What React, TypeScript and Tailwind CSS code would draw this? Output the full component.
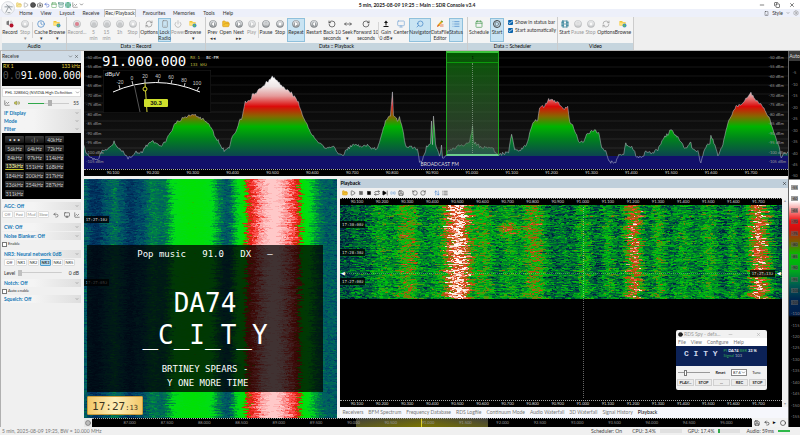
import type { ReactNode } from "react";
import {
  Archive, Calendar, Camera, Check, ChevronDown, Circle, Clock, Film, FolderOpen, Globe, List,
  Minus, MoveHorizontal, Play, Radio, RefreshCw, Repeat, RotateCcw, RotateCw, Save, Search, Settings,
  SkipForward, Smartphone, Square, Undo2, Volume2, X, ArrowUpDown, Copy, LineChart, Monitor, Power,
} from "lucide-react";
import { clsx } from "clsx";

// signal trace, x across the band and y as the level (lower is stronger)
const TRACE = [
  [84, 147], [86, 153], [92, 160], [98, 160], [102, 152], [107, 151], [110, 147], [114, 143], [117, 149], [122, 152],
  [128, 159], [132, 158], [135, 153], [140, 154], [143, 152], [146, 147], [152, 142], [160, 147], [165, 143], [170, 134],
  [173, 128], [178, 122], [183, 119], [192, 115], [200, 119], [207, 123], [215, 137], [220, 145], [224, 152], [229, 149],
  [232, 138], [237, 130], [239, 121], [242, 119], [245, 103], [251, 100], [252, 96], [255, 94], [262, 87], [268, 82],
  [272, 77], [277, 82], [285, 90], [290, 93], [294, 98], [298, 103], [301, 113], [305, 122], [310, 133], [318, 143],
  [325, 150], [333, 148], [338, 154], [343, 155], [348, 149], [355, 145], [362, 148], [367, 146], [372, 150], [377, 149],
  [380, 140], [383, 130], [385, 121], [390, 117], [392, 93], [393, 117], [398, 122], [399, 118], [403, 135], [405, 147],
  [412, 148], [417, 151], [419, 162], [422, 162], [426, 148], [430, 145], [431, 123], [432, 145], [433, 116], [435, 145],
  [439, 158], [441, 147], [442, 160], [447, 153], [457, 147], [463, 146], [469, 143], [472, 128], [473, 143], [480, 148],
  [490, 149], [493, 151], [498, 156], [508, 153], [511, 134], [514, 150], [518, 152], [525, 147], [530, 132], [533, 123],
  [537, 121], [539, 108], [544, 107], [548, 101], [557, 103], [563, 111], [567, 107], [569, 122], [573, 128], [578, 142],
  [583, 143], [586, 135], [594, 131], [598, 135], [601, 149], [605, 153], [609, 163], [615, 163], [618, 157], [623, 156],
  [625, 143], [627, 148], [631, 147], [636, 158], [642, 158], [645, 152], [650, 154], [657, 151], [662, 140], [667, 135],
  [670, 131], [677, 138], [682, 147], [686, 150], [690, 143], [691, 150], [697, 153], [700, 164], [703, 153], [706, 147],
  [709, 145], [710, 136], [714, 147], [717, 157], [722, 145], [725, 132], [728, 120], [735, 108], [742, 104], [747, 98],
  [750, 93], [753, 100], [760, 105], [768, 118], [773, 135], [778, 147], [780, 158], [787, 153],
];

// stations in the recording: centre, peak level, half width
const STATIONS = [
  [17, 140, 5], [42, 130, 13], [67, 118, 14], [93, 133, 10], [117, 90, 17], [142, 122, 11], [168, 129, 13],
  [192, 116, 13], [222, 139, 8], [242, 127, 9], [267, 129, 8], [292, 103, 10], [317, 124, 8], [342, 131, 13],
  [367, 127, 11], [391, 130, 7], [417, 99, 11],
];

type Palette = [number, number, number, number][];

const LIVE: Palette = [
  [82, 255, 200, 200], [90, 250, 150, 150], [95, 250, 70, 65], [102, 225, 20, 10], [106, 120, 120, 0],
  [110, 0, 225, 0], [130, 0, 220, 25], [137, 0, 165, 50], [143, 0, 118, 75], [149, 0, 92, 100],
  [156, 0, 60, 100], [164, 0, 34, 80],
];

const RECORDED: Palette = [
  [82, 255, 250, 245], [90, 250, 225, 210], [97, 235, 110, 80], [104, 210, 60, 15], [111, 140, 110, 10],
  [118, 70, 160, 10], [124, 0, 195, 15], [133, 0, 155, 30], [141, 0, 120, 45], [148, 0, 85, 62],
  [156, 0, 48, 72], [164, 0, 24, 52],
];

// small seeded generator, so that every render is the same
const makeRandom = (seed: number) => () => {
  seed = (seed * 1664525 + 1013904223) % 4294967296;
  return seed / 4294967296;
};

const levelAt = (x: number) => {
  const i = TRACE.findIndex((p) => p[0] >= x);
  if (i <= 0) return TRACE[i === 0 ? 0 : TRACE.length - 1][1];
  const [x0, y0] = TRACE[i - 1];
  const [x1, y1] = TRACE[i];
  return y0 + ((y1 - y0) * (x - x0)) / (x1 - x0);
};

const liveLevel = (x: number) => {
  let sum = 0;
  for (let k = -2; k <= 2; k++) sum += levelAt(84 + x + k);
  return sum / 5;
};

const recordedLevel = (x: number, y: number) => {
  const gain = STATIONS.map(([c, peak, half]) => (151 - peak) * Math.exp(-(((x - c) / half) ** 2)));
  const burst = 22 * Math.exp(-(((x - 168) / 14) ** 2) - ((y - 24) / 6) ** 2);
  return 151 - Math.max(...gain) - burst;
};

const shade = (palette: Palette, y: number) => {
  const step = Math.round((y - 82) / 3) * 3 + 82;
  const v = Math.max(82, Math.min(164, step));
  const i = Math.max(1, palette.findIndex((p) => p[0] >= v));
  const a = palette[i - 1];
  const b = palette[i];
  const t = (v - a[0]) / (b[0] - a[0]);
  return `rgb(${[1, 2, 3].map((k) => Math.round(a[k] + (b[k] - a[k]) * t)).join(",")})`;
};

type FallOptions = { w: number; h: number; level: (x: number, y: number) => number; noise: number; jitter: number; palette: Palette };

// builds one path for each colour out of short horizontal runs
const buildWaterfall = ({ w, h, level, noise, jitter, palette }: FallOptions) => {
  const rnd = makeRandom(w);
  const paths: Record<string, string> = {};
  for (let y = 0; y < h; y++) {
    const shift = (rnd() - 0.5) * jitter;
    const row = (rnd() - 0.5) * noise * 0.4;
    let x = 0;
    while (x < w) {
      const run = Math.min(1 + Math.floor(rnd() * 3), w - x);
      const color = shade(palette, level(x + shift, y) + row + (rnd() + rnd() - 1) * noise);
      paths[color] = (paths[color] ?? "") + `M${x} ${y}h${run}v1h-${run}z`;
      x += run;
    }
  }
  return Object.entries(paths);
};

const mainFall = buildWaterfall({ w: 253, h: 241, level: liveLevel, noise: 6, jitter: 5, palette: LIVE });
const playFall = buildWaterfall({ w: 440, h: 94, level: recordedLevel, noise: 20, jitter: 9, palette: RECORDED });

const Waterfall = ({ data, w, h }: { data: [string, string][]; w: number; h: number }) => (
  <svg viewBox={`0 0 ${w} ${h}`} preserveAspectRatio="none" shapeRendering="crispEdges" className="absolute inset-0 h-full w-full">
    {data.map(([color, d]) => <path key={color} d={d} fill={color} />)}
  </svg>
);

const traceRandom = makeRandom(3);
const tracePoints = Array.from({ length: 704 }, (_, i) => {
  const y = levelAt(84 + i) - 52 + (traceRandom() - 0.5) * 3;
  return `${i},${y.toFixed(1)}`;
}).join(" ");

const freqs = (start: number, count: number, step: number) =>
  Array.from({ length: count }, (_, i) => (start + i * step).toFixed(3));

const bandFreqs = freqs(90.1, 17, 0.1);
const navFreqs = freqs(87, 17, 0.5);

const FreqRow = ({ className, values = bandFreqs }: { className: string; values?: string[] }) => (
  <div className={clsx("flex shrink-0 items-end border-t border-dotted border-[#aaaaaa] text-[4px] leading-[6px]", className)}>
    {values.map((f) => <span key={f} className="w-0 flex-1 text-center">{f}</span>)}
  </div>
);

/* ---------- ribbon ---------- */

const RoundIcon = ({ kind, dim }: { kind: string; dim?: boolean }) => (
  <svg viewBox="0 0 16 16" className={clsx("h-2 w-2", dim && "opacity-50")}>
    <circle cx="8" cy="8" r="7.5" fill="#7f8386" />
    <circle cx="8" cy="7" r="6" fill="#d0d3d6" />
    <circle cx="8" cy="9" r="4.5" fill="#9a9ea1" />
    {kind === "rec" && <circle cx="8" cy="8" r="4" fill="#c8102e" />}
    {kind === "play" && <path d="M6 4l6 4-6 4z" fill="#fff" />}
    {kind === "prev" && <path d="M10 4L5 8l5 4z" fill="#fff" />}
    {kind === "pause" && <path d="M5 5h2v6H5zM9 5h2v6H9z" fill="#fff" />}
    {kind === "stop" && <path d="M5 5h6v6H5z" fill="#fff" />}
  </svg>
);

const BrowseIcon = () => (
  <svg viewBox="0 0 16 16" className="h-2 w-2">
    <path d="M1 2h5l2 2h5v7H1z" fill="#f2c230" />
    <path d="M1 5h12l-2 6H1z" fill="#ffe27a" />
    <circle cx="11" cy="11" r="4" fill="#3b8fd0" />
    <path d="M8 12l3-4 2 3-2 3z" fill="#6cc04a" />
  </svg>
);

const RecordIcon = () => (
  <svg viewBox="0 0 16 16" className="h-2 w-2">
    <path d="M1 3l5-2v10l-5-2z" fill="#777" />
    <path d="M8 2q4 3 0 8M10 1q6 5 0 10" stroke="#999" fill="none" />
    <circle cx="11" cy="11" r="4" fill="#b3122a" />
  </svg>
);

const EditIcon = () => (
  <svg viewBox="0 0 16 16" className="h-2 w-2">
    <path d="M2 14l2-5 7-8 3 2-7 9z" fill="#e7a51d" />
    <path d="M8 8h7v6H8z" fill="#efb7a2" />
    <path d="M2 14l2-5 2 2z" fill="#d6453d" />
    <path d="M11 1l3 2-1 2-3-2z" fill="#58a63c" />
  </svg>
);

const GainIcon = () => (
  <svg viewBox="0 0 16 16" className="h-2 w-2">
    <path d="M8 1l4 5H9v5H7V6H4zM3 12h10v2H3z" fill="#111" />
  </svg>
);

const ico = "h-2 w-2";

type Item = { icon: ReactNode; label: string; sub?: string; w: string; on?: boolean; dim?: boolean; sep?: boolean };
type Group = { title: string; w: string; items: Item[]; checks?: boolean };

const groups: Group[] = [
  {
    title: "Audio", w: "w-[65px]", items: [
      { icon: <RecordIcon />, label: "Record", w: "w-4" },
      { icon: <RoundIcon kind="stop" dim />, label: "Stop", sub: "▾", w: "w-[14px]", dim: true },
      { icon: <Clock className="h-2 w-2 text-[#3b7fc4]" />, label: "Cache", sub: "▾", w: "w-4", sep: true },
      { icon: <BrowseIcon />, label: "Browse", sub: "▾", w: "w-4" },
    ],
  },
  {
    title: "Data :: Record", w: "w-[139px]", items: [
      { icon: <RoundIcon kind="rec" dim />, label: "Record...", w: "w-5", dim: true },
      { icon: <RoundIcon kind="" dim />, label: "5", sub: "min", w: "w-[13px]", dim: true },
      { icon: <RoundIcon kind="" dim />, label: "15", sub: "min", w: "w-[13px]", dim: true },
      { icon: <RoundIcon kind="" dim />, label: "1h", w: "w-[13px]", dim: true },
      { icon: <RoundIcon kind="stop" dim />, label: "Stop", w: "w-[13px]", dim: true },
      { icon: <RefreshCw className="h-2 w-2 text-[#888888]" />, label: "Options", w: "w-[18px]", sep: true },
      { icon: <Smartphone className="h-2 w-2 text-[#888888]" />, label: "Lock", sub: "Radio", w: "w-[13px]", on: true },
      { icon: <Power className="h-2 w-2 text-[#aaaaaa]" />, label: "Power", w: "w-[14px]", dim: true },
      { icon: <BrowseIcon />, label: "Browse", sub: "▾", w: "w-4" },
    ],
  },
  {
    title: "Data :: Playback", w: "w-[262px]", items: [
      { icon: <RoundIcon kind="prev" />, label: "Prev", sub: "◂◂", w: "w-[13px]" },
      { icon: <FolderOpen className="h-2 w-2 fill-[#f2c230] text-[#d99a1c]" />, label: "Open", w: "w-[13px]" },
      { icon: <RoundIcon kind="play" />, label: "Next", sub: "▸▸", w: "w-[13px]" },
      { icon: <RoundIcon kind="play" dim />, label: "Play", w: "w-[13px]", dim: true },
      { icon: <RoundIcon kind="pause" />, label: "Pause", w: "w-[14px]", sep: true },
      { icon: <RoundIcon kind="stop" />, label: "Stop", w: "w-[14px]" },
      { icon: <RoundIcon kind="play" />, label: "Repeat", w: "w-[18px]", on: true },
      { icon: <RoundIcon kind="prev" />, label: "Restart", w: "w-[18px]" },
      { icon: <RotateCcw className={ico} />, label: "Back 10", sub: "seconds", w: "w-[18px]" },
      { icon: <MoveHorizontal className={ico} />, label: "Seek", sub: "▾", w: "w-[13px]" },
      { icon: <RotateCw className={ico} />, label: "Forward 10", sub: "seconds", w: "w-6" },
      { icon: <GainIcon />, label: "Gain", sub: "0 dB▾", w: "w-[14px]", sep: true },
      { icon: <Monitor className="h-2 w-2 text-[#7aa7d6]" />, label: "Center", w: "w-4" },
      { icon: <Search className="h-2 w-2 -scale-x-100 text-[#3b7fc4]" />, label: "Navigator", w: "w-[22px]", on: true },
      { icon: <EditIcon />, label: "DataFile", sub: "Editor", w: "w-[18px]" },
      { icon: <List className="h-2 w-2 text-[#3b7fc4]" />, label: "Status", w: "w-[14px]", on: true },
    ],
  },
  {
    title: "Data :: Scheduler", w: "w-[90px]", checks: true, items: [
      { icon: <Calendar className="h-2 w-2 text-[#4a9c52]" />, label: "Schedule", w: "w-[22px]" },
      { icon: <Play className="h-2 w-2 rounded-full border border-[#444444]" />, label: "Start", w: "w-[14px]", on: true },
    ],
  },
  {
    title: "Video", w: "w-[76px]", items: [
      { icon: <Film className="h-2 w-2 text-[#1f7590]" />, label: "Start", w: "w-[13px]" },
      { icon: <RoundIcon kind="pause" dim />, label: "Pause", w: "w-[13px]", dim: true },
      { icon: <RoundIcon kind="stop" dim />, label: "Stop", w: "w-[13px]", dim: true },
      { icon: <RefreshCw className="h-2 w-2 text-[#999999]" />, label: "Options", w: "w-[18px]" },
      { icon: <BrowseIcon />, label: "Browse", w: "w-4" },
    ],
  },
];

const RibbonButton = ({ item }: { item: Item }) => (
  <>
    {item.sep && <span className="my-1 w-px shrink-0 bg-[#d5d5d5]" />}
    <button
      className={clsx(
        "flex shrink-0 flex-col items-center whitespace-nowrap border pt-px text-[5px] leading-[6px] [&>svg]:shrink-0",
        item.w,
        item.on ? "border-[#8fc0dc] bg-[#c9e4f3]" : "border-transparent",
        item.dim ? "text-[#999999]" : "text-[#333333]",
      )}
    >
      {item.icon}
      <span className="pt-px">{item.label}</span>
      {item.sub && <span>{item.sub}</span>}
    </button>
  </>
);

const MiniCheck = ({ id, label }: { id: string; label: string }) => (
  <div className="flex items-center gap-[2px] whitespace-nowrap">
    <span className="relative flex">
      <input id={id} type="checkbox" defaultChecked className="h-[5px] w-[5px] appearance-none rounded-[1px] bg-[#0a64ad]" />
      <Check className="pointer-events-none absolute inset-0 h-[5px] w-[5px] stroke-[4] text-white" />
    </span>
    <label htmlFor={id}>{label}</label>
  </div>
);

const Ribbon = () => (
  <div className="flex h-[34px] shrink-0 border-b border-[#b8b8b8] bg-[#efefef] pl-[2px]">
    {groups.map((g) => (
      <section key={g.title} className={clsx("flex shrink-0 flex-col border-r border-[#cccccc] bg-[#f4f4f4]", g.w)}>
        <div className="flex min-h-0 flex-1 pb-px pt-px">
          {g.items.map((item, i) => <RibbonButton key={i} item={item} />)}
          {g.checks && (
            <div className="flex flex-col gap-[2px] pl-1 pt-px text-[5px] leading-[6px] text-[#333333]">
              <MiniCheck id="show-status" label="Show in status bar" />
              <MiniCheck id="start-auto" label="Start automatically" />
            </div>
          )}
        </div>
        <h2 className="bg-[#c6d5de] text-center text-[5px] leading-[7px]">{g.title}</h2>
      </section>
    ))}
  </div>
);

const menu = [
  ["Home", "w-5"], ["View", "w-5"], ["Layout", "w-[22px]"], ["Receive", "w-[26px]"], ["Rec/Playback", "w-8"],
  ["Favourites", "w-9"], ["Memories", "w-6"], ["Tools", "w-[26px]"], ["Help", "w-3"],
];

const TopBar = () => (
  <header className="shrink-0">
    <div className="flex h-[9px] items-center justify-between bg-white">
      <div className="flex items-center gap-px pl-4">
        <FolderOpen className="h-[6px] w-[6px] fill-[#f6e69a] text-[#e0c060]" />
        <Play className="h-[6px] w-[6px] text-[#888888]" />
        <Circle className="h-[6px] w-[6px] fill-[#555555] text-[#333333]" />
        <Camera className="h-[6px] w-[6px] text-[#222222]" />
        <Undo2 className="h-[6px] w-[6px] text-[#2a4fc4]" />
        <Calendar className="h-[6px] w-[6px] text-[#4a9c52]" />
        <Archive className="h-[6px] w-[6px] text-[#1f7060]" />
        <Globe className="h-[6px] w-[6px] bg-[#c9e4f3] text-[#2c9a54]" />
        <LineChart className="h-[6px] w-[6px] text-[#555555]" />
        <ChevronDown className="h-[5px] w-[5px]" />
      </div>
      <h1 className="pl-9 text-[5px] font-bold leading-[8px] text-[#222222]">5 min, 2025-08-09 19:25 :: Main :: SDR Console v3.4</h1>
      <div className="flex w-[86px] items-center justify-end gap-[9px] pr-[5px]">
        <Minus className="h-[6px] w-[6px]" />
        <Copy className="h-[6px] w-[6px]" />
        <X className="h-[6px] w-[6px]" />
      </div>
    </div>
    <nav className="flex h-2 bg-[#edf0fa] pl-4 text-[5px] leading-[8px] text-[#333333]">
      {menu.map(([m, w]) => (
        <a key={m} href="#" className={clsx("shrink-0 whitespace-nowrap text-center", w, m === "Rec/Playback" && "border border-b-0 border-[#c4c4c4] bg-[#fafafa] leading-[7px]")}>{m}</a>
      ))}
      <span className="ml-auto flex items-center gap-[3px] pr-px">
        <Smartphone className="h-[5px] w-[5px]" />Style <ChevronDown className="h-1 w-1" /><Settings className="h-[6px] w-[6px] text-[#888888]" />
      </span>
    </nav>
    <svg viewBox="0 0 24 24" className="absolute left-px top-px h-[14px] w-[14px]">
      <circle cx="12" cy="12" r="11" fill="#f6f7f9" stroke="#c3c7cc" />
      <path d="M8 20L14 8M11 20h5M6 10h14M9 6l4 3M13 9l5 7" stroke="#8b9298" strokeWidth="1.5" fill="none" />
    </svg>
  </header>
);

/* ---------- receive panel ---------- */

const Section = ({ title }: { title: string }) => (
  <h3 className="flex h-2 items-center justify-between bg-gradient-to-r from-[#f4f4f4] from-40% to-[#dedede] pl-[2px] pr-[2px] text-[5px] font-bold text-[#1276b4]">
    {title}<ChevronDown className="h-1 w-1 text-[#444444]" />
  </h3>
);

const filters = [
  "• • •", "‹ | ›", "40kHz", "56kHz", "64kHz", "72kHz", "84kHz", "97kHz", "114kHz", "133kHz", "151kHz", "168kHz",
  "184kHz", "200kHz", "217kHz", "236kHz", "254kHz", "287kHz", "311kHz",
];

const Chips = ({ names, active, dim }: { names: string[]; active?: string; dim?: boolean }) => (
  <div className="flex gap-px">
    {names.map((n) => (
      <button key={n} className={clsx("h-[7px] w-[11px] rounded-[1px] border text-[4px] leading-[5px]", n === active ? "border-[#4c9ed0] bg-[#b9dcf0] font-bold" : "border-[#dddddd] bg-white", dim && "text-[#888888]")}>{n}</button>
    ))}
  </div>
);

const ReceivePanel = () => (
  <aside className="flex w-[83px] shrink-0 flex-col border-l border-[#b0b0b0] bg-[#f0f0f0] pl-px pr-[2px] text-[5px] leading-[6px] text-[#333333]">
    <h2 className="flex h-[10px] shrink-0 items-center justify-between bg-[#cfdbe6] pr-[2px]">
      Receive<span className="flex gap-px"><ChevronDown className="h-[5px] w-[5px]" /><X className="h-[5px] w-[5px]" /></span>
    </h2>
    <div className="mt-[2px] h-[23px] shrink-0 bg-black">
      <div className="flex justify-between px-px text-[#e0d040]"><span>RX 1</span><span>133 kHz</span></div>
      <p className="whitespace-nowrap text-right font-['DejaVu_Sans_Mono',monospace] text-[10px] leading-[14px] text-white"><span className="text-[#555555]">0.0</span>91.000.000</p>
    </div>
    <div className="relative mt-[2px] shrink-0">
      <select aria-label="Output device" className="block h-[9px] w-full appearance-none border border-[#dddddd] bg-white pl-[2px] pr-[7px] text-[4px] leading-[7px]">
        <option>PHL 328B6Q (NVIDIA High Definition Audio)</option>
      </select>
      <ChevronDown className="pointer-events-none absolute right-px top-[2px] h-[5px] w-[5px]" />
    </div>
    <div className="flex h-3 shrink-0 items-center gap-1 px-[2px]">
      <LineChart className="h-[6px] w-[6px]" /><Volume2 className="h-[6px] w-[6px] fill-[#c9c94a] text-[#777744]" />
      <input type="range" aria-label="Volume" defaultValue={55} className="ml-1 h-[6px] w-0 flex-1 appearance-none bg-[linear-gradient(to_right,#2fa84a_40%,#cccccc_40%)] bg-[length:100%_1px] bg-center bg-no-repeat [&::-webkit-slider-thumb]:h-[6px] [&::-webkit-slider-thumb]:w-1 [&::-webkit-slider-thumb]:appearance-none [&::-webkit-slider-thumb]:bg-[#b0b0b0]" />
      <span>55</span>
    </div>
    <Section title="IF Display" />
    <Section title="Mode" />
    <Section title="Filter" />
    <div className="grid h-[66px] shrink-0 grid-cols-[repeat(3,19px)] content-start gap-x-px gap-y-[2px] bg-black pl-[3px] pt-[3px]">
      {filters.map((f) => (
        <button key={f} className={clsx("h-[7px] rounded-[1px] bg-gradient-to-b from-[#3c3c3c] to-[#141414] text-[5px] leading-[6px]", f === "133kHz" ? "border-b border-[#c8c820] text-[#ffffa0]" : "text-[#cccccc]")}>{f}</button>
      ))}
    </div>
    <div className="mt-[3px] flex flex-col gap-px">
      <Section title="AGC: Off" />
      <div className="flex items-center justify-between pb-1 pr-px">
        <Chips names={["Off", "Fast", "Med", "Slow"]} dim />
        <Undo2 className="h-[6px] w-[6px]" /><Monitor className="h-[6px] w-[6px]" /><LineChart className="h-[6px] w-[6px]" />
      </div>
      <Section title="CW: Off" />
      <Section title="Noise Blanker: Off" />
      <div className="flex items-center gap-px pb-[2px]">
        <input id="nb-enable" type="checkbox" className="h-[5px] w-[5px] appearance-none border border-[#777777] bg-white" />
        <label htmlFor="nb-enable" className="text-[4px]">Enable</label>
      </div>
      <Section title="NR3: Neural network 0dB" />
      <div className="pl-[2px]"><Chips names={["Off", "NR1", "NR2", "NR3", "NR4", "NR5"]} active="NR3" /></div>
      <div className="flex h-[11px] items-center gap-[3px] px-[2px]">
        <label htmlFor="nr-level">Level</label>
        <input id="nr-level" type="range" defaultValue={0} className="h-[6px] w-0 flex-1 appearance-none bg-[linear-gradient(#ccc,#ccc)] bg-[length:100%_1px] bg-center bg-no-repeat [&::-webkit-slider-thumb]:h-[6px] [&::-webkit-slider-thumb]:w-1 [&::-webkit-slider-thumb]:appearance-none [&::-webkit-slider-thumb]:bg-[#c0c0c0]" />
        <span className="pl-1">0 dB</span>
      </div>
      <Section title="Notch: Off" />
      <div className="flex items-center gap-px">
        <input id="notch-auto" type="checkbox" className="h-[5px] w-[5px] appearance-none border border-[#777777] bg-white" />
        <label htmlFor="notch-auto" className="text-[4px]">Auto enable</label>
      </div>
      <Section title="Squelch: Off" />
    </div>
  </aside>
);

/* ---------- spectrum ---------- */

const dbm = Array.from({ length: 12 }, (_, i) => `${-50 - i * 5} dBm`);

const DbmColumn = ({ className }: { className: string }) => (
  <div className={clsx("absolute bottom-[3px] top-[3px] flex flex-col justify-between whitespace-nowrap text-[4px] leading-[8px] text-[#999999]", className)}>
    {dbm.map((d) => <span key={d}>{d}</span>)}
  </div>
);

const Meter = () => (
  <svg viewBox="0 0 108 43" className="h-[43px] w-[108px]" fontFamily="Liberation Sans, sans-serif">
    <path d="M0 0h108v43H0z" fill="#000" stroke="#222" />
    <text x="2" y="6" fontSize="6" fill="#eee">dBµV</text>
    <path d="M10 22Q52 3 97 22" stroke="#fff" strokeWidth="1" fill="none" />
    <path d="M17 19l-1-4M30 15l-1-4M42 13V9M55 13l1-4M68 14l1-4M81 17l1-4M94 21l2-4" stroke="#ccc" />
    <g fontSize="5" fill="#ccc" textAnchor="middle">
      <text x="17" y="14">-20</text>
      <text x="29" y="10">0</text>
      <text x="42" y="8">20</text>
      <text x="55" y="8">40</text>
      <text x="68" y="9">60</text>
      <text x="81" y="12">80</text>
      <text x="94" y="15">100</text>
    </g>
    <path d="M31 14l6 28" stroke="#555" />
    <path d="M42 13l2 29" stroke="#d4d43c" />
    <circle cx="42" cy="19" r="2" fill="#000" stroke="#e0e030" />
    <rect x="41" y="29" width="24" height="8" rx="1" fill="#cfe02c" />
    <text x="53" y="35" fontSize="6" fontWeight="bold" fill="#111" textAnchor="middle">30.3</text>
  </svg>
);

const Spectrum = () => (
  <section className="flex h-[125px] shrink-0 flex-col bg-black">
    <div className="relative flex-1 overflow-hidden">
      <svg viewBox="0 0 703 118" preserveAspectRatio="none" className="absolute inset-0 h-full w-full">
        <defs>
          <linearGradient id="sky" x1="0" y1="0" x2="0" y2="1">
            <stop offset="0.2" stopColor="#000" />
            <stop offset="1" stopColor="#1b1b1b" />
          </linearGradient>
          <linearGradient id="heat" gradientUnits="userSpaceOnUse" x1="0" y1="25" x2="0" y2="105">
            <stop offset="0" stopColor="#fff" />
            <stop offset="0.13" stopColor="#eee6e6" />
            <stop offset="0.25" stopColor="#e59a9a" />
            <stop offset="0.38" stopColor="#dc0a0a" />
            <stop offset="0.5" stopColor="#8a6400" />
            <stop offset="0.63" stopColor="#00b400" />
            <stop offset="0.78" stopColor="#00841c" />
            <stop offset="1" stopColor="#0c4450" />
          </linearGradient>
        </defs>
        <path d="M0 0h703v118H0z" fill="url(#sky)" />
        {dbm.map((d, i) => <path key={d} d={`M0 ${7 + i * 9}h703`} stroke="#fff" strokeOpacity="0.09" />)}
        <polygon points={`0,118 ${tracePoints} 703,118`} fill="url(#heat)" />
        <path d="M0 105h703v13H0z" fill="#11106a" />
        <polyline points={tracePoints} fill="none" stroke="#c8ccd8" strokeWidth="0.6" strokeOpacity="0.8" />
      </svg>
      <div className="absolute left-[51.4%] top-0 h-[105px] w-[7.6%] border border-[#1fa51f] border-b-2 border-b-[#6ccc8c] border-t-2 border-t-[#3cc43c] bg-gradient-to-b from-[#008000b0] to-[#50605070]">
        <div className="flex h-[10px] items-center justify-center border-b border-[#0c9a0c] text-[4px] text-black">1</div>
        <div className="mx-auto h-[90px] w-0 border-l border-dotted border-[#a0b0a0]/60" />
      </div>
      <DbmColumn className="left-[2px]" />
      <DbmColumn className="right-[2px]" />
      <div className="absolute left-[18px] top-px flex whitespace-nowrap">
        <p className="font-['DejaVu_Sans_Mono',monospace] text-[14px] leading-[18px] text-white">91.000.000</p>
        <div className="pl-1 pt-[2px] font-['DejaVu_Sans_Mono',monospace] text-[4px] leading-[7px] text-[#c8c040]">
          <p>RX 1 <span className="pl-1 text-white">BC-FM</span></p>
          <p>133 kHz</p>
        </div>
      </div>
      <div className="absolute left-[19px] top-[19px]"><Meter /></div>
      <p className="absolute bottom-[2px] left-[47.8%] text-[5px] leading-[6px] text-[#dddddd]">BROADCAST FM</p>
    </div>
    <FreqRow className="h-[7px] bg-black pl-[9px] pr-[17px] text-[#dddddd]" />
  </section>
);

/* ---------- waterfalls ---------- */

const TimeTag = ({ time, className }: { time: string; className: string }) => (
  <span className={clsx("absolute w-[25px] bg-black/80 text-center font-['DejaVu_Sans_Mono',monospace] text-[4px] leading-[7px] text-[#dddddd]", className)}>{time}</span>
);

const MainWaterfall = () => (
  <section className="relative w-[36%] shrink-0 overflow-hidden bg-[#003050]">
    <Waterfall data={mainFall} w={253} h={241} />
    <TimeTag time="17:27:10z" className="left-0 top-[37px]" />
    <TimeTag time="17:27:05z" className="left-0 top-[100px]" />
    <div className="absolute bottom-[26px] left-[3px] flex h-[147px] w-[236px] flex-col items-center whitespace-pre bg-black/75 pt-[2px] font-['DejaVu_Sans_Mono',monospace] text-[9px] leading-[14px] text-white">
      <p>Pop music   91.0   DX   —</p>
      <p className="pt-[26px] text-[26px] leading-8">DA74</p>
      <p className="text-[26px] leading-8">_C_I_T_Y</p>
      <p className="pt-[11px]">BRTINEY SPEARS -</p>
      <p> Y ONE MORE TIME</p>
    </div>
    <div className="absolute bottom-[3px] left-[3px] h-[19px] w-14 rounded-[1px] border border-[#c99a3a] bg-gradient-to-r from-[#f3c766] via-[#fdeeb8] to-[#f3c766] text-center font-['DejaVu_Sans_Mono',monospace] text-[11px] leading-[19px] text-[#3c3420]">
      17:27<span className="text-[7px]">:13</span>
    </div>
  </section>
);

const RdsSpy = () => (
  <div className="absolute bottom-[10px] right-[15px] flex w-[91px] flex-col rounded-[2px] bg-[#f1f1f1] pb-1 text-[5px] leading-[8px] text-[#777777]">
    <div className="flex items-center gap-px px-[2px] text-[#999999]">
      <Circle className="h-[5px] w-[5px] fill-[#222222] text-black" />RDS Spy - defa...
      <Minus className="ml-auto h-[5px] w-[5px]" /><X className="ml-[22px] mr-1 h-[5px] w-[5px]" />
    </div>
    <div className="flex gap-[5px] bg-white px-[2px]">
      <span>File</span><span>View</span><span>Configure</span><span>Help</span>
    </div>
    <div className="flex h-5 bg-[#0c2257]">
      <p className="whitespace-pre pl-2 pt-[2px] font-['Liberation_Mono',monospace] text-[8px] font-bold leading-[12px] text-[#cfd8ee]">C I T Y</p>
      <div className="whitespace-nowrap pl-[6px] pt-[2px] text-[4px] leading-[5px] text-[#2fae50]">
        <p>PI <b className="text-white">DA74</b> BER <b className="text-white">33 %</b></p>
        <p>Signal <span className="text-[#b0b8c8]">103</span></p>
      </div>
    </div>
    <div className="flex h-[13px] items-center gap-px px-[2px] text-[4px] text-[#222222]">
      <input type="range" aria-label="Input gain" defaultValue={20} className="h-[9px] w-8 appearance-none bg-[linear-gradient(#999,#999)] bg-[length:100%_1px] bg-center bg-no-repeat [&::-webkit-slider-thumb]:h-[6px] [&::-webkit-slider-thumb]:w-[3px] [&::-webkit-slider-thumb]:appearance-none [&::-webkit-slider-thumb]:border [&::-webkit-slider-thumb]:border-[#777] [&::-webkit-slider-thumb]:bg-white" />
      <button className="w-[19px] font-bold">Reset</button>
      <span className="relative flex">
        <select aria-label="Frequency" className="h-[7px] w-4 appearance-none border border-[#888888] bg-white pl-px text-[4px] leading-[5px]"><option>87.6</option></select>
        <ChevronDown className="pointer-events-none absolute right-px top-px h-[5px] w-[5px]" />
      </span>
      <button className="flex-1">Tune</button>
    </div>
    <div className="flex gap-px px-px text-[4px] leading-[5px] text-[#222222]">
      {["PLAY...", "STOP", "...", "REC", "STOP"].map((b, i) => (
        <button key={i} className="h-[7px] flex-1 border border-[#d0d0d0] bg-[#ececec] font-bold">{b}</button>
      ))}
    </div>
  </div>
);

const playTabs = ["Receivers", "BFM Spectrum", "Frequency Database", "RDS Logfile", "Continuum Mode", "Audio Waterfall", "3D Waterfall", "Signal History", "Playback"];

const ti = "h-[6px] w-[6px]";

const Playback = () => (
  <section className="ml-[2px] flex min-w-0 flex-1 flex-col bg-[#f0f0f0] pl-px">
    <h2 className="flex h-[9px] shrink-0 items-center justify-between bg-[#c0cfdb] pr-px text-[5px] font-bold">Playback<X className="h-[5px] w-[5px]" /></h2>
    <div className="flex h-[10px] shrink-0 items-center gap-[2px] pl-[2px] text-[#222222]">
      <FolderOpen className={clsx(ti, "fill-[#f2c230] text-[#d99a1c]")} />
      <Play className={ti} /><Square className={clsx(ti, "scale-75 fill-[#666666] text-[#666666]")} /><Square className={clsx(ti, "scale-75 fill-black")} />
      <Repeat className={ti} /><SkipForward className={clsx(ti, "fill-black")} /><Radio className={clsx(ti, "text-[#7aa7d6]")} /><Save className={ti} />
      <RotateCcw className={clsx(ti, "ml-[6px]")} /><RotateCw className={ti} />
      <ArrowUpDown className={clsx(ti, "ml-[6px] text-[#2a6fc4]")} /><List className={ti} />
    </div>
    <div className="flex min-h-0 flex-1">
      <div className="relative flex min-w-0 flex-1 flex-col bg-black">
        <FreqRow className="h-[7px] pl-1 pr-[11px] text-[#dddddd]" />
        <div className="relative h-[94px] shrink-0">
          <Waterfall data={playFall} w={440} h={94} />
          <TimeTag time="17:30:00z" className="left-0 top-4" />
          <TimeTag time="17:28:30z" className="left-0 top-11" />
          <TimeTag time="17:27:00z" className="left-0 top-[73px]" />
          <div className="absolute inset-x-0 top-[68px] border-t border-dotted border-white/25" />
          <TimeTag time="17:27:13z" className="right-[7px] top-[65px]" />
          <span className="absolute left-px top-[65px] text-[5px] leading-[6px] text-white">◀</span>
          <span className="absolute right-px top-[65px] text-[5px] leading-[6px] text-white">◀</span>
        </div>
        <div className="relative flex-1"><RdsSpy /></div>
        <div className="absolute bottom-[9px] left-[55%] top-[9px] border-l border-dotted border-white/40" />
        <FreqRow className="h-[7px] pl-1 pr-[11px] text-[#dddddd]" />
      </div>
      <div className="flex w-[6px] shrink-0 flex-col items-center justify-between text-[4px] text-[#999999]"><span>▴</span><span>▾</span></div>
    </div>
    <nav className="flex h-[11px] shrink-0 items-center gap-[5px] whitespace-nowrap bg-[#f6f7fc] pl-[2px] text-[5px] text-[#777777]">
      {playTabs.map((t) => <a key={t} href="#" className={clsx(t === "Playback" && "text-black")}>{t}</a>)}
    </nav>
  </section>
);

const NavStrip = () => (
  <div className="flex h-[9px] shrink-0 bg-black">
    <span className="flex w-2 items-center justify-center bg-[#e6e6e6]"><Circle className="h-[6px] w-[6px] fill-[#bbbbbb] text-[#555555]" /></span>
    <div className="relative flex min-w-0 flex-1">
      <div className="absolute inset-y-0 left-[40%] flex w-[20%] bg-[#404040]">
        <div className="h-full w-1/2 border-r border-[#e0d020] bg-gradient-to-br from-transparent to-[#7a7400]" />
        <div className="h-full w-1/2 bg-gradient-to-bl from-transparent to-[#7a7400]" />
      </div>
      <FreqRow className="relative h-[8px] flex-1 pl-[19px] pr-[7px] leading-[7px] text-[#999999]" values={navFreqs} />
    </div>
    <span className="flex w-9 items-center justify-around bg-[#f2f2f2] text-[5px]">
      <Save className={ti} /><Undo2 className={ti} /><b>▸</b><Circle className={ti} />
    </span>
  </div>
);

const scaleLabels = Array.from({ length: 31 }, (_, i) => -5 * (i + 1));

const LevelBar = () => (
  <div className="flex w-3 shrink-0 flex-col border-l border-[#666666] bg-[linear-gradient(#000_128px,#fff_129px,#fff_150px,#f8a0a0_158px,#ee1010_170px,#d01010_178px,#7a5a00_190px,#00c000_204px,#00a81c_220px,#005c50_234px,#002850_248px,#001c48_264px,#000_266px)]">
    <button className="h-[10px] shrink-0 bg-[#3a3a3a] text-[5px] leading-[8px] text-[#dddddd]">Auto</button>
    <div className="flex flex-1 flex-col justify-around pb-1 pt-[6px]">
      {scaleLabels.map((n) => (
        <span key={n} className={clsx("mx-[2px] text-center text-[4px] leading-[5px]", n < -50 && n > -110 ? "bg-[#606060]/60 text-[#222222]" : "text-[#888888]")}>{n}</span>
      ))}
    </div>
  </div>
);

const StatusBar = () => (
  <footer className="flex h-2 shrink-0 items-center gap-[10px] whitespace-nowrap bg-[#f0f0f0] pl-[2px] pr-[10px] text-[5px] leading-[8px] text-[#444444]">
    <span className="mr-auto text-[#777777]">5 min, 2025-08-09 19:25, BW = 10.000 MHz</span>
    <span>Scheduler: On</span>
    <span className="flex items-center gap-1">CPU: 3.4%<i className="h-1 w-[22px] bg-[#e0e0e0]" /></span>
    <span className="-ml-1 flex items-center gap-1">GPU: 17.4%<i className="flex h-1 w-[22px] bg-[#e0e0e0]"><i className="w-[2px] bg-[#2fa84a]" /></i></span>
    <span className="-ml-1 flex items-center gap-1">Audio: 59ms<i className="h-[2px] w-3 bg-[#2fb84a]" /></span>
  </footer>
);

export default function App() {
  return (
    <div className="relative flex h-screen flex-col overflow-hidden bg-[#f0f0f0] font-[Lato,'Liberation_Sans',sans-serif]">
      <TopBar />
      <Ribbon />
      <div className="flex min-h-0 flex-1">
        <ReceivePanel />
        <main className="ml-px flex min-w-0 flex-1 flex-col">
          <Spectrum />
          <div className="mt-[3px] flex min-h-0 flex-1">
            <MainWaterfall />
            <Playback />
          </div>
          <NavStrip />
        </main>
        <LevelBar />
      </div>
      <StatusBar />
    </div>
  );
}
